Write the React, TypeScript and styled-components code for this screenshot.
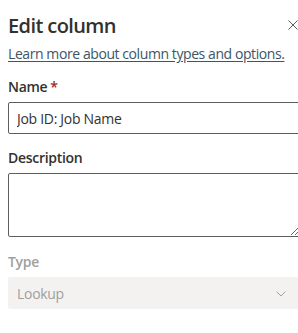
import styled, { createGlobalStyle } from 'styled-components'

const Global = createGlobalStyle`
  html, body {
    margin: 0;
    padding: 0;
    background: #ffffff;
    overflow: hidden;
  }
  body {
    font-family: "Open Sans", "Noto Sans", sans-serif;
    color: #323130;
    letter-spacing: -0.3px;
  }
`

const Panel = styled.div`
  width: 300px;
  padding: 12px 0 0 8px;
  box-sizing: border-box;
  display: flex;
  flex-direction: column;
`

const Header = styled.div`
  display: flex;
  align-items: flex-start;
  justify-content: space-between;
  height: 28px;
`

const Title = styled.h1`
  margin: 0;
  font-size: 20px;
  line-height: 28px;
  font-weight: 600;
  letter-spacing: -0.6px;
  color: #323130;
`

const CloseButton = styled.button`
  border: 0;
  background: transparent;
  padding: 0;
  margin: 8px 2px 0 0;
  width: 10px;
  height: 10px;
  display: flex;
  cursor: pointer;
`

const HelpLink = styled.a`
  margin-top: 4px;
  font-size: 14px;
  line-height: 20px;
  letter-spacing: -0.42px;
  color: #3c5665;
  text-decoration: underline;
  text-underline-offset: 2px;
`

const Field = styled.div<{ $gap: number }>`
  display: flex;
  flex-direction: column;
  margin-top: ${p => p.$gap}px;
`

const Label = styled.label<{ $disabled?: boolean }>`
  font-size: 14px;
  line-height: 20px;
  font-weight: 600;
  padding: 5px 0;
  color: ${p => (p.$disabled ? '#a19f9d' : '#323130')};
`

const Required = styled.span`
  color: #a4262c;
  margin-left: 3px;
`

const TextInput = styled.input`
  box-sizing: border-box;
  height: 32px;
  width: 100%;
  border: 1px solid #605e5c;
  border-radius: 2px;
  padding: 0 8px;
  font-family: inherit;
  font-size: 14px;
  letter-spacing: -0.3px;
  color: #323130;
  outline: none;
`

const TextArea = styled.textarea`
  box-sizing: border-box;
  height: 64px;
  width: 100%;
  border: 1px solid #605e5c;
  border-radius: 2px;
  padding: 6px 8px;
  font-family: inherit;
  font-size: 14px;
  outline: none;
  resize: vertical;
`

const Select = styled.div`
  box-sizing: border-box;
  height: 32px;
  width: 100%;
  border-radius: 2px;
  background: #f3f2f1;
  padding: 0 8px 0 9px;
  display: flex;
  align-items: center;
  justify-content: space-between;
  font-size: 14px;
  color: #a19f9d;
`

const Chevron = styled.svg`
  margin-right: 6px;
  margin-top: 2px;
`

export default function App() {
  return (
    <Panel>
      <Global />
      <Header>
        <Title>Edit column</Title>
        <CloseButton aria-label="Close">
          <svg width="10" height="10" viewBox="0 0 10 10">
            <path d="M0.5 0.5 L9.5 9.5 M9.5 0.5 L0.5 9.5" stroke="#605e5c" strokeWidth="1" fill="none" />
          </svg>
        </CloseButton>
      </Header>
      <HelpLink href="#">Learn more about column types and options.</HelpLink>
      <Field $gap={8}>
        <Label>
          Name<Required>*</Required>
        </Label>
        <TextInput defaultValue="Job ID: Job Name" />
      </Field>
      <Field $gap={9}>
        <Label>Description</Label>
        <TextArea />
      </Field>
      <Field $gap={10}>
        <Label $disabled>Type</Label>
        <Select>
          <span>Lookup</span>
          <Chevron width="10" height="6" viewBox="0 0 10 6">
            <path d="M0.5 0.5 L5 5 L9.5 0.5" stroke="#a19f9d" strokeWidth="1" fill="none" />
          </Chevron>
        </Select>
      </Field>
    </Panel>
  )
}
